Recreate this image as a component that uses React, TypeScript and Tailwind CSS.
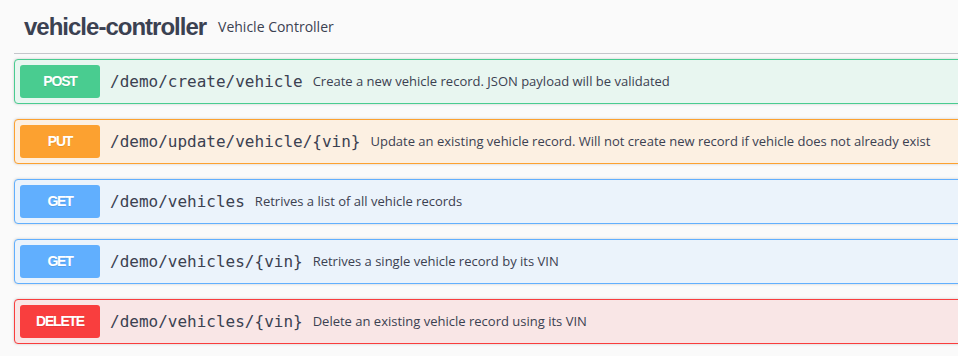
import React from "react";

type Op = {
  method: string;
  path: string;
  desc: string;
  color: string;
};

const ops: Op[] = [
  { method: "POST", path: "/demo/create/vehicle", desc: "Create a new vehicle record. JSON payload will be validated", color: "post" },
  { method: "PUT", path: "/demo/update/vehicle/{vin}", desc: "Update an existing vehicle record. Will not create new record if vehicle does not already exist", color: "put" },
  { method: "GET", path: "/demo/vehicles", desc: "Retrives a list of all vehicle records", color: "get" },
  { method: "GET", path: "/demo/vehicles/{vin}", desc: "Retrives a single vehicle record by its VIN", color: "get" },
  { method: "DELETE", path: "/demo/vehicles/{vin}", desc: "Delete an existing vehicle record using its VIN", color: "delete" },
];

const styles: Record<string, { row: string; badge: string }> = {
  post: { row: "border-[#49cc90] bg-[#e8f6f0]", badge: "bg-[#49cc90]" },
  put: { row: "border-[#fca130] bg-[#fcf0e2]", badge: "bg-[#fca130]" },
  get: { row: "border-[#61affe] bg-[#ebf3fb]", badge: "bg-[#61affe]" },
  delete: { row: "border-[#f93e3e] bg-[#f9e6e6]", badge: "bg-[#f93e3e]" },
};

const sans = { fontFamily: '"Liberation Sans", Arial, sans-serif' };

export default function App() {
  return (
    <div className="w-[958px] h-[356px] overflow-hidden bg-[#fafafa] text-[#3b4151]">
      <div className="w-[1000px] pl-[14px]">
        <div className="flex items-center h-[54px] pl-[10px] border-b border-[#c4c6cb]">
          <span className="text-[24px] font-bold leading-none tracking-[-1px]" style={sans}>
            vehicle-controller
          </span>
          <span className="text-[14px] pl-[12px]" style={{ fontFamily: '"Open Sans", sans-serif' }}>
            Vehicle Controller
          </span>
        </div>
        <div className="mt-[5px] flex flex-col gap-[15px]">
          {ops.map((op, i) => {
            const s = styles[op.color];
            return (
              <div
                key={i}
                className={`flex items-center p-[5px] border rounded-[4px] shadow-[0_0_3px_rgba(0,0,0,0.19)] ${s.row}`}
              >
                <div
                  className={`w-[80px] h-[33px] flex items-center justify-center rounded-[3px] text-white text-[14px] font-bold tracking-[-1.2px] [text-shadow:0_1px_0_rgba(0,0,0,0.1)] ${s.badge}`}
                  style={sans}
                >
                  {op.method}
                </div>
                <span
                  className="px-[10px] text-[16px] whitespace-nowrap"
                  style={{ fontFamily: '"DejaVu Sans Mono", "Liberation Mono", monospace' }}
                >
                  {op.path}
                </span>
                <span
                  className="text-[13px] whitespace-nowrap"
                  style={{ fontFamily: '"Open Sans", sans-serif' }}
                >
                  {op.desc}
                </span>
              </div>
            );
          })}
        </div>
      </div>
    </div>
  );
}
